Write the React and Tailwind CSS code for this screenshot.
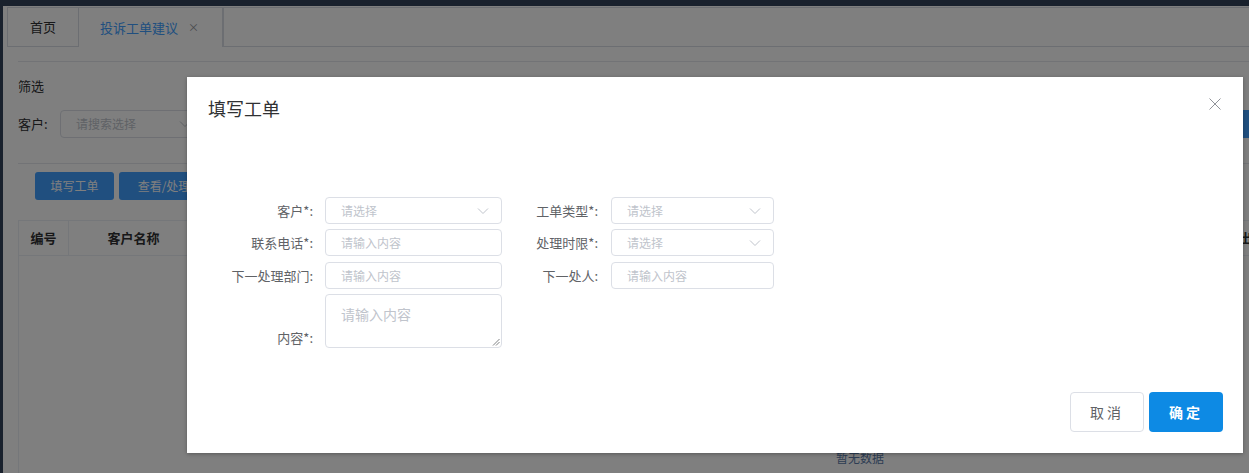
import React from "react";

const font = { fontFamily: '"Noto Sans CJK SC", "Noto Sans", sans-serif' };

function Chevron({ className = "" }) {
  return (
    <svg width="12" height="8" viewBox="0 0 12 8" className={className}>
      <path d="M1 1.5 L6 6.5 L11 1.5" fill="none" stroke="#c0c4cc" strokeWidth="1" />
    </svg>
  );
}

function SelectBox({ w }) {
  return (
    <div className={`${w} h-[27px] border border-[#dcdfe6] rounded-[4px] flex items-center justify-between pl-[15px] pr-[12px] bg-white`}>
      <span className="text-[12px] text-[#c0c4cc] leading-none">请选择</span>
      <Chevron />
    </div>
  );
}

function InputBox({ w }) {
  return (
    <div className={`${w} h-[27px] border border-[#dcdfe6] rounded-[4px] flex items-center pl-[15px] bg-white`}>
      <span className="text-[12px] text-[#c0c4cc] leading-none">请输入内容</span>
    </div>
  );
}

function Label({ w, children, end = false }) {
  return (
    <div className={`${w} h-full flex justify-end ${end ? "items-end pb-[1px]" : "items-center"} text-[13px] text-[#606266] whitespace-nowrap`}>
      {children}
    </div>
  );
}

export default function App() {
  return (
    <div className="relative w-[1249px] h-[473px] overflow-hidden bg-white" style={font}>
      {/* background page */}
      <div className="h-[6px] bg-[#33435a]" />
      <div className="flex h-[467px]">
        <div className="w-[3px] bg-[#33435a]" />
        <div className="flex-1 flex flex-col">
          {/* tabs */}
          <div className="flex h-[41px] pl-[4px] pt-[1px]">
            <div className="w-[72px] border border-[#d8dce5] flex items-center justify-center text-[13px] text-[#303133]">首页</div>
            <div className="w-[144px] border-t border-r border-[#d8dce5] flex items-center pl-[21px] gap-[10px] text-[13px] text-[#409eff]">
              <span>投诉工单建议</span>
              <span className="text-[11px] text-[#909399]">×</span>
            </div>
            <div className="flex-1 border-t border-b border-l border-[#d8dce5]" />
          </div>
          <div className="flex-1 pl-[15px] flex flex-col">
            <div className="mt-[14px] border-t border-[#e4e7ed]" />
            <div className="mt-[14px] text-[13px] text-[#303133]">筛选</div>
            <div className="mt-[14px] flex items-center h-[28px]">
              <span className="text-[13px] text-[#303133] w-[42px]">客户:</span>
              <div className="w-[140px] h-[28px] border border-[#dcdfe6] rounded-[4px] flex items-center justify-between pl-[15px] pr-[8px]">
                <span className="text-[12px] text-[#c0c4cc]">请搜索选择</span>
                <Chevron />
              </div>
              <div className="ml-auto w-[20px] h-[28px] bg-[#409eff] rounded-l-[3px] text-white text-[12px] flex items-center pl-[2px] overflow-hidden whitespace-nowrap">查</div>
            </div>
            <div className="mt-[25px] border-t border-[#e4e7ed]" />
            <div className="mt-[8px] flex gap-[5px] pl-[17px]">
              <div className="w-[79px] h-[28px] bg-[#409eff] rounded-[3px] text-white text-[12px] flex items-center justify-center">填写工单</div>
              <div className="w-[90px] h-[28px] bg-[#409eff] rounded-[3px] text-white text-[12px] flex items-center justify-center">查看/处理</div>
            </div>
            <div className="mt-[20px] flex-1 border-l border-t border-[#ebeef5] flex flex-col">
              <div className="h-[35px] flex border-b border-[#ebeef5] text-[13px] font-bold text-[#303133]">
                <div className="w-[50px] border-r border-[#ebeef5] flex items-center justify-center">编号</div>
                <div className="w-[130px] border-r border-[#ebeef5] flex items-center justify-center">客户名称</div>
                <div className="flex-1" />
                <div className="w-[10px] flex items-center overflow-hidden">出</div>
              </div>
              <div className="flex-1 flex items-end justify-center pb-[6px] pl-[452px]">
                <span className="text-[12px] text-[#5a7aa8]">暂无数据</span>
              </div>
            </div>
          </div>
        </div>
      </div>

      {/* overlay */}
      <div className="absolute inset-0 bg-black/50" />

      {/* dialog */}
      <div className="absolute left-[187px] top-[77px] w-[1056px] h-[376px] bg-white shadow-[0_1px_4px_rgba(0,0,0,0.3)] flex flex-col">
        <div className="pt-[19px] pl-[21px] text-[18px] leading-[24px] text-[#303133]">填写工单</div>
        <svg className="absolute right-[22px] top-[21px]" width="12" height="12" viewBox="0 0 12 12">
          <path d="M0.5 0.5 L11.5 11.5 M11.5 0.5 L0.5 11.5" stroke="#909399" strokeWidth="1" />
        </svg>

        <div className="pt-[77px] pl-[26px] flex flex-col">
          <div className="flex h-[27px] items-center">
            <Label w="w-[100px]">客户*:</Label>
            <div className="w-[12px]" />
            <SelectBox w="w-[177px]" />
            <Label w="w-[96px]">工单类型*:</Label>
            <div className="w-[13px]" />
            <SelectBox w="w-[163px]" />
          </div>
          <div className="flex h-[27px] items-center mt-[5px]">
            <Label w="w-[100px]">联系电话*:</Label>
            <div className="w-[12px]" />
            <InputBox w="w-[177px]" />
            <Label w="w-[96px]">处理时限*:</Label>
            <div className="w-[13px]" />
            <SelectBox w="w-[163px]" />
          </div>
          <div className="flex h-[27px] items-center mt-[6px]">
            <Label w="w-[100px]">下一处理部门:</Label>
            <div className="w-[12px]" />
            <InputBox w="w-[177px]" />
            <Label w="w-[96px]">下一处人:</Label>
            <div className="w-[13px]" />
            <InputBox w="w-[163px]" />
          </div>
          <div className="flex h-[54px] mt-[5px]">
            <Label w="w-[100px]" end>内容*:</Label>
            <div className="w-[12px]" />
            <div className="relative w-[177px] h-[54px] border border-[#dcdfe6] rounded-[4px] pl-[15px] pt-[6px]">
              <span className="text-[14px] text-[#c0c4cc] leading-none">请输入内容</span>
              <svg className="absolute right-[1px] bottom-[1px]" width="8" height="8" viewBox="0 0 8 8">
                <path d="M7.5 1 L1 7.5 M7.5 4 L4 7.5" stroke="#606266" strokeWidth="0.8" />
              </svg>
            </div>
          </div>
        </div>

        <div className="mt-auto flex justify-end gap-[5px] pr-[20px] pb-[21px]">
          <div className="w-[74px] h-[40px] border border-[#dcdfe6] rounded-[4px] flex items-center justify-center text-[14px] text-[#606266] tracking-[3px]">取消</div>
          <div className="w-[74px] h-[40px] bg-[#0d8ae4] rounded-[4px] flex items-center justify-center text-[14px] text-white font-semibold tracking-[3px]">确定</div>
        </div>
      </div>
    </div>
  );
}
